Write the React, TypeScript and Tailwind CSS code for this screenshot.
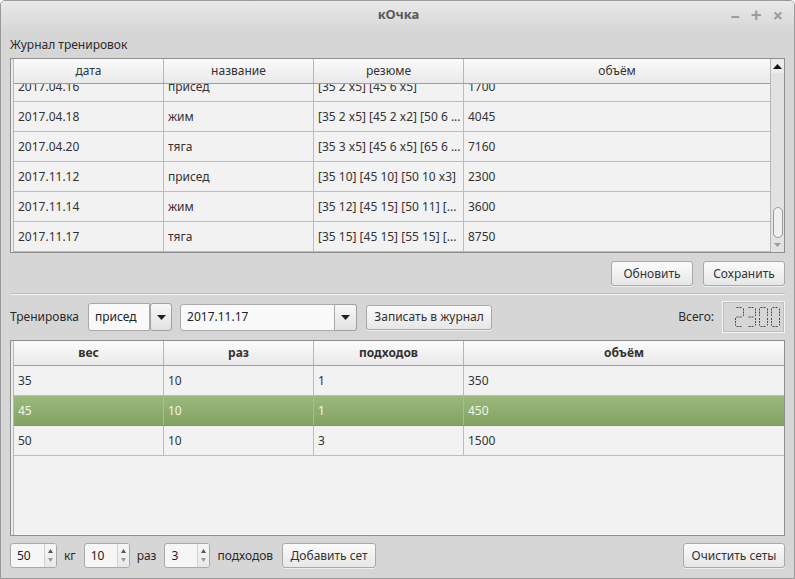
import React from "react";

const FONT = { fontFamily: '"Noto Sans", "Open Sans", sans-serif' };

const topRows = [
  ["2017.04.16", "присед", "[35 2 x5] [45 6 x5]", "1700"],
  ["2017.04.18", "жим", "[35 2 x5] [45 2 x2] [50 6 ...", "4045"],
  ["2017.04.20", "тяга", "[35 3 x5] [45 6 x5] [65 6 ...", "7160"],
  ["2017.11.12", "присед", "[35 10] [45 10] [50 10 x3]", "2300"],
  ["2017.11.14", "жим", "[35 12] [45 15] [50 11] [...", "3600"],
  ["2017.11.17", "тяга", "[35 15] [45 15] [55 15] [...", "8750"],
];

const bottomRows = [
  ["35", "10", "1", "350"],
  ["45", "10", "1", "450"],
  ["50", "10", "3", "1500"],
];

function Btn({ children, w }: { children: React.ReactNode; w: string }) {
  return (
    <div
      className={`h-[25px] ${w} flex items-center justify-center rounded-[3px] border border-[#a9a9a9] bg-gradient-to-b from-[#fbfbfb] to-[#e7e7e7] text-[12px] text-[#333] shadow-[0_1px_0_rgba(255,255,255,0.6)]`}
    >
      {children}
    </div>
  );
}

function DownTri({ color = "#222" }: { color?: string }) {
  return (
    <svg width="9" height="5" viewBox="0 0 9 5">
      <path d="M0 0 L9 0 L4.5 5 Z" fill={color} />
    </svg>
  );
}

function UpTri({ color = "#222" }: { color?: string }) {
  return (
    <svg width="9" height="5" viewBox="0 0 9 5">
      <path d="M0 5 L9 5 L4.5 0 Z" fill={color} />
    </svg>
  );
}

const SEGS: Record<string, string[]> = {
  "0": ["a", "b", "c", "d", "e", "f"],
  "2": ["a", "b", "g", "e", "d"],
  "3": ["a", "b", "g", "c", "d"],
};

function Digit({ d, x }: { d: string; x: number }) {
  const w = 9;
  const h = 20;
  const lines: Record<string, [number, number, number, number]> = {
    a: [1.5, 0.5, w - 1.5, 0.5],
    b: [w - 0.5, 1.5, w - 0.5, h / 2 - 1],
    c: [w - 0.5, h / 2 + 1, w - 0.5, h - 1.5],
    d: [1.5, h - 0.5, w - 1.5, h - 0.5],
    e: [0.5, h / 2 + 1, 0.5, h - 1.5],
    f: [0.5, 1.5, 0.5, h / 2 - 1],
    g: [1.5, h / 2, w - 1.5, h / 2],
  };
  return (
    <g transform={`translate(${x},0)`}>
      {SEGS[d].map((s) => {
        const [x1, y1, x2, y2] = lines[s];
        return (
          <line
            key={s}
            x1={x1}
            y1={y1}
            x2={x2}
            y2={y2}
            stroke="#4a4a4a"
            strokeWidth="1"
            strokeDasharray="2 1"
          />
        );
      })}
    </g>
  );
}

function Spin({ value, w }: { value: string; w: string }) {
  return (
    <div
      className={`h-[25px] ${w} flex rounded-[3px] border border-[#a9a9a9] bg-[#f6f6f6] overflow-hidden`}
    >
      <div className="flex-1 flex items-center pl-[6px] text-[12px] text-[#222]">{value}</div>
      <div className="w-[12px] flex flex-col items-center justify-center gap-[5px] bg-gradient-to-b from-[#f6f6f6] to-[#e9e9e9] border-l border-[#d0d0d0]">
        <svg width="5" height="4" viewBox="0 0 5 4">
          <path d="M0 4 L5 4 L2.5 0 Z" fill="#555" />
        </svg>
        <svg width="5" height="4" viewBox="0 0 5 4">
          <path d="M0 0 L5 0 L2.5 4 Z" fill="#999" />
        </svg>
      </div>
    </div>
  );
}

export default function App() {
  return (
    <div
      style={FONT}
      className="w-[795px] h-[579px] bg-[#d6d6d6] border border-[#999] rounded-t-[5px] overflow-hidden flex flex-col text-[#333]"
    >
      {/* Title bar */}
      <div className="h-[30px] shrink-0 grid grid-cols-[1fr_auto_1fr] items-center bg-gradient-to-b from-[#e9e9e9] to-[#d7d7d7]">
        <div />
        <div className="text-[13px] font-bold text-[#5a5a5a] pl-[2px] pb-[2px]">кОчка</div>
        <div className="flex justify-end items-center gap-[11px] pr-[11px] pb-[2px] text-[#9c9c9c] font-bold">
          <span className="text-[18px] leading-none">–</span>
          <span className="text-[19px] leading-none">+</span>
          <span className="text-[18px] leading-none">×</span>
        </div>
      </div>

      <div className="flex-1 flex flex-col px-[9px]">
        <div className="h-[27px] flex items-center text-[12px] text-[#2a2a2a]">Журнал тренировок</div>

        {/* Top table */}
        <div className="h-[195px] border border-[#8e8e8e] flex bg-[#f2f2f2]">
          <div className="w-[3px] border-r border-[#b7b7b7] bg-[#ececec]" />
          <div className="flex-1 flex flex-col">
            <div className="h-[25px] shrink-0 grid grid-cols-[150px_150px_150px_1fr] bg-gradient-to-b from-[#fbfbfb] to-[#e9e9e9] border-b border-[#9e9e9e] text-[12px] text-[#333]">
              {["дата", "название", "резюме", "объём"].map((h, i) => (
                <div key={h} className={`flex items-center justify-center ${i < 3 ? "border-r border-[#b7b7b7]" : ""}`}>
                  {h}
                </div>
              ))}
            </div>
            <div className="flex-1 overflow-hidden">
              <div className="mt-[-12px]">
                {topRows.map((r, ri) => (
                  <div key={ri} className="h-[30px] grid grid-cols-[150px_150px_150px_1fr] border-b border-[#bcbcbc] text-[12px] text-[#333]">
                    {r.map((c, i) => (
                      <div key={i} className={`flex items-center pl-[4px] whitespace-nowrap overflow-hidden ${i < 3 ? "border-r border-[#bcbcbc]" : ""}`}>
                        {c}
                      </div>
                    ))}
                  </div>
                ))}
              </div>
            </div>
          </div>
          {/* Scrollbar */}
          <div className="w-[14px] border-l border-[#b7b7b7] bg-[#e2e2e2] flex flex-col items-center">
            <div className="h-[14px] flex items-center justify-center bg-[#ececec] w-full">
              <UpTri color="#111" />
            </div>
            <div className="flex-1 w-full flex flex-col justify-end items-center">
              <div className="w-[10px] h-[31px] rounded-[5px] border border-[#9c9c9c] bg-[#efefef]" />
            </div>
            <div className="h-[14px] flex items-center justify-center">
              <svg width="7" height="4" viewBox="0 0 7 4">
                <path d="M0 0 L7 0 L3.5 4 Z" fill="#9a9a9a" />
              </svg>
            </div>
          </div>
        </div>

        {/* Buttons */}
        <div className="mt-[8px] flex justify-end gap-[10px]">
          <Btn w="w-[82px]">Обновить</Btn>
          <Btn w="w-[82px]">Сохранить</Btn>
        </div>

        {/* Separator */}
        <div className="mt-[7px] border-t border-[#bebebe] border-b border-b-[#f2f2f2]" />

        {/* Training row */}
        <div className="mt-[6px] h-[32px] flex items-center text-[12px]">
          <span className="text-[#2a2a2a]">Тренировка</span>
          <div className="ml-[9px] w-[84px] h-[28px] flex">
            <div className="flex-1 rounded-l-[3px] border border-[#a9a9a9] bg-[#f9f9f9] flex items-center pl-[6px] text-[#222]">присед</div>
            <div className="w-[22px] rounded-[3px] border border-[#a0a0a0] bg-gradient-to-b from-[#f7f7f7] to-[#e2e2e2] flex items-center justify-center">
              <DownTri />
            </div>
          </div>
          <div className="ml-[8px] w-[177px] h-[27px] flex">
            <div className="flex-1 rounded-l-[3px] border border-[#a9a9a9] bg-[#f9f9f9] flex items-center pl-[6px] text-[#222]">2017.11.17</div>
            <div className="w-[22px] rounded-r-[3px] border border-l-0 border-[#a0a0a0] bg-gradient-to-b from-[#f7f7f7] to-[#e2e2e2] flex items-center justify-center">
              <DownTri />
            </div>
          </div>
          <div className="ml-[9px]">
            <Btn w="w-[126px]">Записать в журнал</Btn>
          </div>
          <div className="flex-1" />
          <span className="text-[#2a2a2a]">Всего:</span>
          <div className="ml-[8px] w-[63px] h-[32px] border border-[#f4f4f4] outline outline-1 outline-[#bdbdbd] -outline-offset-2 flex items-center justify-end pr-[1px]">
            <svg width="50" height="20" viewBox="0 0 50 20">
              <Digit d="2" x={2} />
              <Digit d="3" x={14} />
              <Digit d="0" x={26} />
              <Digit d="0" x={38} />
            </svg>
          </div>
        </div>

        {/* Bottom table */}
        <div className="mt-[7px] h-[196px] border border-[#8e8e8e] flex bg-[#f2f2f2]">
          <div className="w-[3px] border-r border-[#b7b7b7] bg-[#ececec]" />
          <div className="flex-1 flex flex-col">
            <div className="h-[25px] shrink-0 grid grid-cols-[150px_150px_150px_1fr] bg-gradient-to-b from-[#fbfbfb] to-[#e9e9e9] border-b border-[#9e9e9e] text-[12px] font-bold text-[#333]">
              {["вес", "раз", "подходов", "объём"].map((h, i) => (
                <div key={h} className={`flex items-center justify-center ${i < 3 ? "border-r border-[#b7b7b7]" : ""}`}>
                  {h}
                </div>
              ))}
            </div>
            {bottomRows.map((r, ri) => {
              const sel = ri === 1;
              return (
                <div
                  key={ri}
                  className={`h-[30px] grid grid-cols-[150px_150px_150px_1fr] border-b text-[12px] ${
                    sel
                      ? "bg-gradient-to-b from-[#9bb97c] to-[#84a262] text-[#f2f6ee] border-[#8a8a8a]"
                      : "border-[#bcbcbc] text-[#333]"
                  }`}
                >
                  {r.map((c, i) => (
                    <div key={i} className={`flex items-center pl-[4px] ${i < 3 ? (sel ? "border-r border-[#a9b8a0]" : "border-r border-[#bcbcbc]") : ""}`}>
                      {c}
                    </div>
                  ))}
                </div>
              );
            })}
          </div>
        </div>

        {/* Bottom controls */}
        <div className="mt-[7px] h-[25px] flex items-center text-[12px] text-[#2a2a2a]">
          <Spin value="50" w="w-[47px]" />
          <span className="ml-[7px]">кг</span>
          <div className="ml-[8px]">
            <Spin value="10" w="w-[46px]" />
          </div>
          <span className="ml-[7px]">раз</span>
          <div className="ml-[8px]">
            <Spin value="3" w="w-[46px]" />
          </div>
          <span className="ml-[7px]">подходов</span>
          <div className="ml-[9px]">
            <Btn w="w-[94px]">Добавить сет</Btn>
          </div>
          <div className="flex-1" />
          <Btn w="w-[102px]">Очистить сеты</Btn>
        </div>
      </div>
    </div>
  );
}
